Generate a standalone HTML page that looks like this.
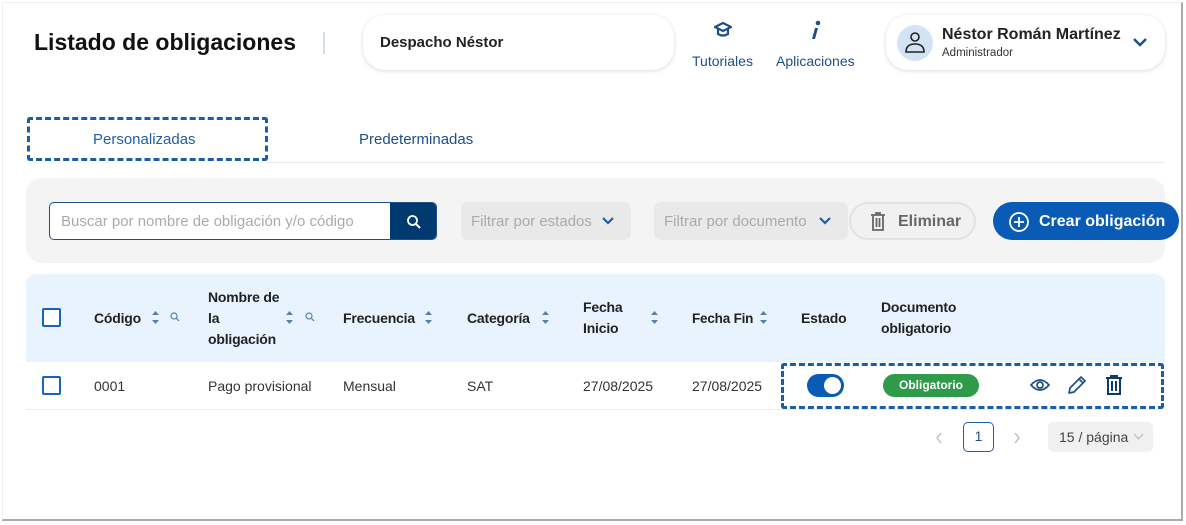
<!DOCTYPE html>
<html><head><meta charset="utf-8"><style>
*{box-sizing:border-box;margin:0;padding:0}
body{width:1186px;height:525px;background:#fff;font-family:"Liberation Sans",sans-serif;position:relative;overflow:hidden;color:#222}
.a{position:absolute}
.frame{left:2px;top:2px;width:1181px;height:519px;border-right:2px solid #aaa;border-bottom:2px solid #aaa;border-top:1px solid #eee;border-left:1px solid #eee}
.card{background:#fff;border-radius:22px;box-shadow:0 1px 4px rgba(0,0,0,.15)}
.blue{color:#1f4f86}
.th{font-size:14px;font-weight:bold;color:#222;line-height:21px;letter-spacing:-0.2px}
.td{font-size:14px;color:#333}
.cb{width:19px;height:19px;border:2px solid #1565c0;border-radius:2px;background:#fff}
</style></head><body>
<div class="a frame"></div>
<div class="a" style="left:34px;top:29px;font-size:23px;font-weight:bold;color:#111">Listado de obligaciones</div>
<div class="a" style="left:323px;top:32px;width:2px;height:22px;background:#cfe0f0"></div>
<div class="a card" style="left:363px;top:15px;width:311px;height:55px"></div>
<div class="a" style="left:380px;top:34px;font-size:15px;font-weight:bold">Despacho Néstor</div>
<svg class="a" style="left:713px;top:21px" width="20" height="18" viewBox="0 0 20 18"><path d="M2 6 L10 2 L18 6 L10 10 Z" fill="none" stroke="#1f4f86" stroke-width="2.2" stroke-linejoin="round"/><path d="M5 8 V13 Q10 16 15 13 V8" fill="none" stroke="#1f4f86" stroke-width="2.2"/></svg>
<div class="a blue" style="left:692px;top:53px;font-size:14px">Tutoriales</div>
<svg class="a" style="left:810px;top:20px" width="12" height="20" viewBox="0 0 12 20"><circle cx="8" cy="3" r="2.3" fill="#1f4f86"/><path d="M5 8 L8 8 L5 19 L2 19 Z" fill="#1f4f86"/></svg>
<div class="a blue" style="left:776px;top:53px;font-size:14px">Aplicaciones</div>
<div class="a card" style="left:886px;top:15px;width:279px;height:55px"></div>
<div class="a" style="left:897px;top:25px;width:36px;height:36px;border-radius:50%;background:#d3e3f5"></div>
<svg class="a" style="left:903px;top:30px" width="24" height="26" viewBox="0 0 24 26"><circle cx="12" cy="7" r="4" fill="none" stroke="#222" stroke-width="1.6"/><path d="M3 22 Q3 14 12 14 Q21 14 21 22 Z" fill="none" stroke="#222" stroke-width="1.6"/></svg>
<div class="a" style="left:942px;top:26px;font-size:16px;font-weight:bold">Néstor Román Martínez</div>
<div class="a" style="left:942px;top:47px;font-size:11.5px;color:#333">Administrador</div>
<svg class="a" style="left:1132px;top:36px" width="16" height="12"><path d="M2 3 L8 9 L14 3" fill="none" stroke="#1f4f86" stroke-width="2.5"/></svg>

<div class="a" style="left:27px;top:117px;width:241px;height:44px;border:3px dashed #1b5ea6;border-radius:3px"></div>
<div class="a" style="left:93px;top:131px;font-size:15px;color:#1f5fa8">Personalizadas</div>
<div class="a" style="left:359px;top:131px;font-size:15px;color:#1f4f86">Predeterminadas</div>
<div class="a" style="left:268px;top:162px;width:897px;height:1px;background:#eaeaea"></div>

<div class="a" style="left:26px;top:178px;width:1139px;height:85px;background:#f4f4f4;border-radius:16px"></div>
<div class="a" style="left:49px;top:202px;width:388px;height:38px;border:1px solid #1f4f86;border-radius:5px;background:#fff;overflow:hidden">
<div class="a" style="left:11px;top:10px;font-size:15px;color:#aaa;white-space:nowrap">Buscar por nombre de obligación y/o código</div>
<div class="a" style="right:0;top:0;width:46px;height:38px;background:#003a70"></div>
<svg class="a" style="left:356px;top:11px" width="16" height="16"><circle cx="6.5" cy="6.5" r="4.5" fill="none" stroke="#fff" stroke-width="1.8"/><path d="M10 10 L14 14" stroke="#fff" stroke-width="2"/></svg>
</div>
<div class="a" style="left:461px;top:202px;width:170px;height:38px;background:#e9e9e9;border-radius:7px"></div>
<div class="a" style="left:471px;top:213px;font-size:15px;color:#aaa">Filtrar por estados</div>
<svg class="a" style="left:602px;top:217px" width="12" height="9"><path d="M1 1 L6 6 L11 1" fill="none" stroke="#1f5fa8" stroke-width="2.2"/></svg>
<div class="a" style="left:654px;top:202px;width:194px;height:38px;background:#e9e9e9;border-radius:7px"></div>
<div class="a" style="left:664px;top:213px;font-size:15px;color:#aaa">Filtrar por documento</div>
<svg class="a" style="left:819px;top:217px" width="12" height="9"><path d="M1 1 L6 6 L11 1" fill="none" stroke="#1f5fa8" stroke-width="2.2"/></svg>
<div class="a" style="left:849px;top:202px;width:127px;height:38px;border:2px solid #e2e2e2;border-radius:19px;background:#f1f1f1"></div>
<svg class="a" style="left:870px;top:212px" width="16" height="19"><path d="M1 3 H15 M6 3 V1 H10 V3 M3 3 V18 H13 V3 M6.5 6 V15 M9.5 6 V15" fill="none" stroke="#666" stroke-width="1.8"/></svg>
<div class="a" style="left:898px;top:213px;font-size:16px;font-weight:bold;color:#666">Eliminar</div>
<div class="a" style="left:993px;top:202px;width:186px;height:38px;background:#0a5bb5;border-radius:19px"></div>
<svg class="a" style="left:1008px;top:211px" width="22" height="22"><circle cx="11" cy="11" r="9" fill="none" stroke="#fff" stroke-width="1.8"/><path d="M11 6 V16 M6 11 H16" stroke="#fff" stroke-width="1.8"/></svg>
<div class="a" style="left:1039px;top:213px;font-size:16px;font-weight:bold;color:#fff">Crear obligación</div>

<div class="a" style="left:26px;top:274px;width:1139px;height:88px;background:#e8f3fe;border-radius:10px 10px 0 0"></div>
<div class="a cb" style="left:42px;top:308px"></div>
<div class="a th" style="left:94px;top:308px">Código</div>
<div class="a th" style="left:208px;top:287px">Nombre de<br>la<br>obligación</div>
<div class="a th" style="left:343px;top:308px">Frecuencia</div>
<div class="a th" style="left:467px;top:308px">Categoría</div>
<div class="a th" style="left:583px;top:297px">Fecha<br>Inicio</div>
<div class="a th" style="left:692px;top:308px;font-size:13.5px">Fecha Fin</div>
<div class="a th" style="left:801px;top:308px">Estado</div>
<div class="a th" style="left:881px;top:297px">Documento<br>obligatorio</div>
<svg class="a" style="left:0;top:0" width="1186" height="525">
<g fill="#5b7fa8">
<path d="M152 315 L155.5 311 L159 315Z M152 320 L155.5 324 L159 320Z"/>
<path d="M286 315 L289.5 311 L293 315Z M286 320 L289.5 324 L293 320Z"/>
<path d="M425 315 L428.5 311 L432 315Z M425 320 L428.5 324 L432 320Z"/>
<path d="M542 315 L545.5 311 L549 315Z M542 320 L545.5 324 L549 320Z"/>
<path d="M651 315 L654.5 311 L658 315Z M651 320 L654.5 324 L658 320Z"/>
<path d="M760 315 L763.5 311 L767 315Z M760 320 L763.5 324 L767 320Z"/>
</g>
<g fill="none" stroke="#5b7fa8" stroke-width="1.2"><circle cx="174" cy="316" r="3"/><path d="M176 318 L179 321"/><circle cx="309" cy="316" r="3"/><path d="M311 318 L314 321"/></g>
</svg>
<div class="a" style="left:26px;top:409px;width:1139px;height:1px;background:#ececec"></div>
<div class="a cb" style="left:42px;top:376px"></div>
<div class="a td" style="left:94px;top:378px">0001</div>
<div class="a td" style="left:208px;top:378px">Pago provisional</div>
<div class="a td" style="left:343px;top:378px">Mensual</div>
<div class="a td" style="left:467px;top:378px">SAT</div>
<div class="a td" style="left:583px;top:378px">27/08/2025</div>
<div class="a td" style="left:692px;top:378px">27/08/2025</div>
<div class="a" style="left:781px;top:363px;width:383px;height:46px;border:3px dashed #1b5ea6;border-radius:3px"></div>
<div class="a" style="left:807px;top:374px;width:37px;height:23px;border-radius:12px;background:#0a5bb5"></div>
<div class="a" style="left:824px;top:377px;width:17px;height:17px;border-radius:50%;background:#fff"></div>
<div class="a" style="left:883px;top:374px;width:96px;height:23px;border-radius:12px;background:#2e9a4a;color:#fff;font-size:12px;font-weight:bold;text-align:center;line-height:23px">Obligatorio</div>
<svg class="a" style="left:1030px;top:377px" width="20" height="16"><path d="M1 8 Q10 -2 19 8 Q10 18 1 8Z" fill="none" stroke="#1f4f86" stroke-width="1.7"/><circle cx="10" cy="8" r="3" fill="none" stroke="#1f4f86" stroke-width="1.7"/></svg>
<svg class="a" style="left:1066px;top:374px" width="22" height="22"><path d="M3 19 L4 14 L15 3 L19 7 L8 18 Z M13 5 L17 9" fill="none" stroke="#1f4f86" stroke-width="1.7" stroke-linejoin="round"/></svg>
<svg class="a" style="left:1105px;top:375px" width="18" height="20"><path d="M1 3 H17 M6 3 V1 H12 V3 M3 3 V19 H15 V3 M7 6 V16 M11 6 V16" fill="none" stroke="#0d3a6e" stroke-width="2"/></svg>

<svg class="a" style="left:934px;top:431px" width="10" height="14"><path d="M7 2 L3 7 L7 12" fill="none" stroke="#bbb" stroke-width="1.4"/></svg>
<div class="a" style="left:963px;top:422px;width:31px;height:30px;border:1.5px solid #1f5fa8;border-radius:5px;text-align:center;line-height:27px;font-size:14px;color:#1f4f86">1</div>
<svg class="a" style="left:1012px;top:431px" width="10" height="14"><path d="M3 2 L7 7 L3 12" fill="none" stroke="#bbb" stroke-width="1.4"/></svg>
<div class="a" style="left:1048px;top:422px;width:105px;height:30px;background:#f0f0f0;border-radius:5px"></div>
<div class="a" style="left:1059px;top:429px;font-size:14px;color:#444">15 / página</div>
<svg class="a" style="left:1133px;top:433px" width="11" height="8"><path d="M1 1 L5.5 6 L10 1" fill="none" stroke="#bbb" stroke-width="1.2"/></svg>
</body></html>
